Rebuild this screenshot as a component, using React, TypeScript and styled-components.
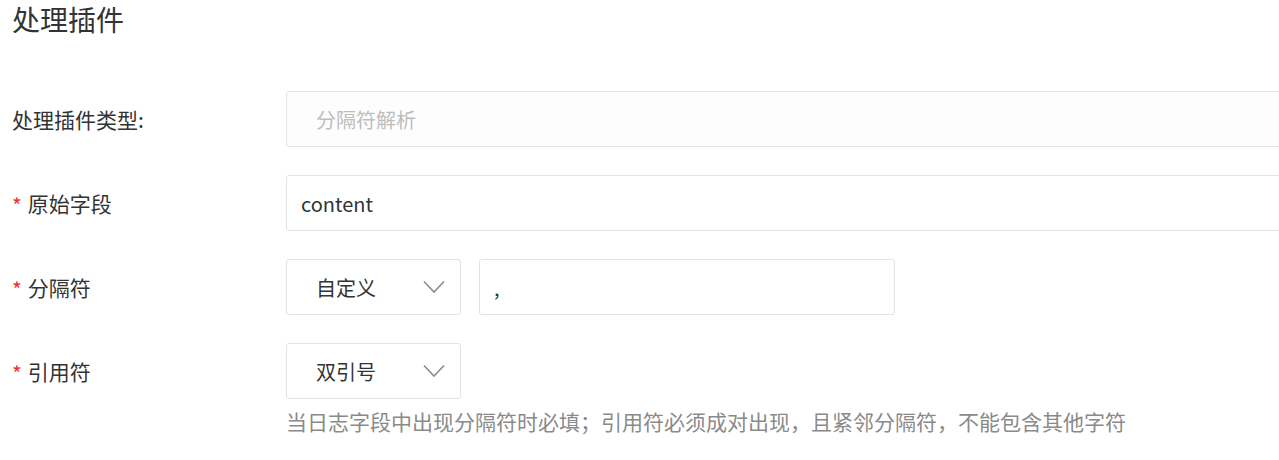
import React from "react";
import styled, { createGlobalStyle } from "styled-components";

const GlobalStyle = createGlobalStyle`
  html, body {
    margin: 0;
    padding: 0;
    background: #fff;
    overflow: hidden;
  }
  body {
    font-family: "Noto Sans CJK SC", "Noto Sans", sans-serif;
    color: #333;
  }
`;

const Page = styled.div`
  width: 1320px;
  padding: 0 0 0 12px;
`;

const Title = styled.h2`
  margin: 0;
  padding-top: 1px;
  height: 36px;
  line-height: 36px;
  font-size: 28px;
  font-weight: 400;
  color: #333;
`;

const Form = styled.div`
  margin-top: 54px;
  display: flex;
  flex-direction: column;
  gap: 28px;
`;

const Row = styled.div`
  display: grid;
  grid-template-columns: 274px 1fr;
  align-items: start;
`;

const Label = styled.label`
  height: 56px;
  display: flex;
  align-items: center;
  font-size: 21px;
  color: #333;
`;

const Star = styled.span`
  color: #f0302a;
  font-size: 21px;
  margin-right: 6px;
  margin-top: 4px;
`;

const Control = styled.div`
  display: flex;
  flex-direction: column;
`;

const Inline = styled.div`
  display: flex;
  gap: 18px;
`;

const Field = styled.div<{ $width?: number; $disabled?: boolean; $pad?: number }>`
  box-sizing: border-box;
  height: 56px;
  width: ${({ $width }) => ($width ? `${$width}px` : "100%")};
  border: 1px solid #e3e3e3;
  border-radius: 3px;
  background: ${({ $disabled }) => ($disabled ? "#fdfdfd" : "#fff")};
  padding: 0 ${({ $pad }) => $pad ?? 14}px;
  display: flex;
  align-items: center;
  font-size: 20px;
  color: ${({ $disabled }) => ($disabled ? "#bdbdbd" : "#333")};
`;

const Select = styled(Field)`
  justify-content: space-between;
  padding: 0 15px 0 29px;
`;

const Help = styled.div`
  margin-top: 7px;
  font-size: 21px;
  line-height: 30px;
  color: #8a8a8a;
`;

function Chevron() {
  return (
    <svg width="22" height="14" viewBox="0 0 22 14" fill="none">
      <path d="M1 1.5 L11 12 L21 1.5" stroke="#8c8c8c" strokeWidth="1.6" />
    </svg>
  );
}

export default function App() {
  return (
    <Page>
      <GlobalStyle />
      <Title>处理插件</Title>
      <Form>
        <Row>
          <Label>处理插件类型:</Label>
          <Control>
            <Field $disabled $pad={29} $width={1100}>
              分隔符解析
            </Field>
          </Control>
        </Row>
        <Row>
          <Label>
            <Star>*</Star>原始字段
          </Label>
          <Control>
            <Field $width={1100}>content</Field>
          </Control>
        </Row>
        <Row>
          <Label>
            <Star>*</Star>分隔符
          </Label>
          <Control>
            <Inline>
              <Select $width={175}>
                自定义
                <Chevron />
              </Select>
              <Field $width={416}>,</Field>
            </Inline>
          </Control>
        </Row>
        <Row>
          <Label>
            <Star>*</Star>引用符
          </Label>
          <Control>
            <Select $width={175}>
              双引号
              <Chevron />
            </Select>
            <Help>
              当日志字段中出现分隔符时必填；引用符必须成对出现，且紧邻分隔符，不能包含其他字符
            </Help>
          </Control>
        </Row>
      </Form>
    </Page>
  );
}
